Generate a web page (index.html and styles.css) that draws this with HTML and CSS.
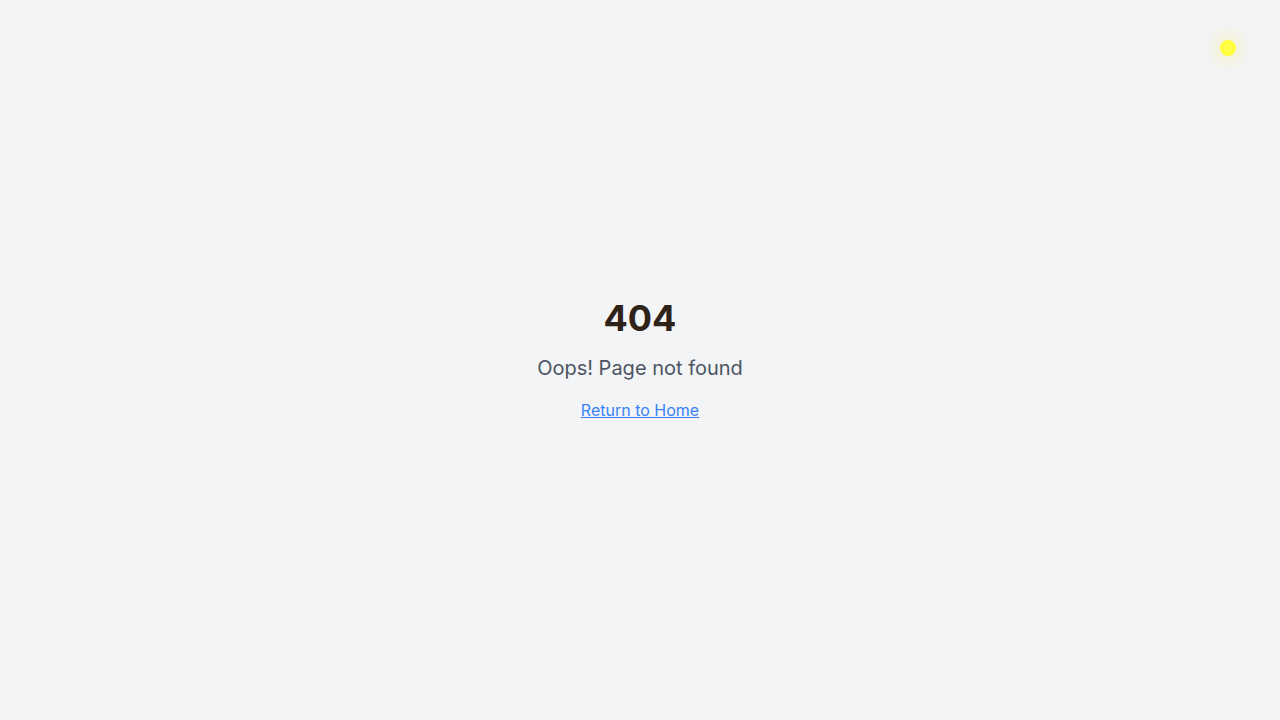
FILE: index.html
```html
<!DOCTYPE html>
<html lang="en">
<head>
<meta charset="utf-8">
<title>404</title>
<link rel="stylesheet" href="styles.css">
</head>
<body>
<div class="sun"></div>
<main class="page">
  <div class="box">
    <h1 class="code">404</h1>
    <p class="msg">Oops! Page not found</p>
    <a class="home" href="/">Return to Home</a>
  </div>
</main>
</body>
</html>
```
FILE: styles.css
```css
* { box-sizing: border-box; }
html, body { margin: 0; padding: 0; }
body {
  font-family: Inter, "Noto Sans", sans-serif;
  background: #f3f4f6;
}
.page {
  min-height: 100vh;
  display: flex;
  align-items: center;
  justify-content: center;
}
.box { text-align: center; }
.code {
  margin: 0 0 16px;
  font-size: 36px;
  line-height: 40px;
  font-weight: 700;
  color: #2e2219;
}
.msg {
  margin: 0 0 16px;
  font-size: 20px;
  line-height: 28px;
  color: #4b5563;
}
.home {
  font-size: 16px;
  line-height: 24px;
  color: #3b82f6;
  text-decoration: underline;
}
.sun {
  position: fixed;
  top: 40px;
  right: 44px;
  width: 16px;
  height: 16px;
  border-radius: 50%;
  background: radial-gradient(circle at 50% 50%, #ffff50 0%, #ffff3a 60%, #fff530 100%);
  box-shadow: 0 0 16px 6px rgba(255, 235, 0, 0.18);
}
```
